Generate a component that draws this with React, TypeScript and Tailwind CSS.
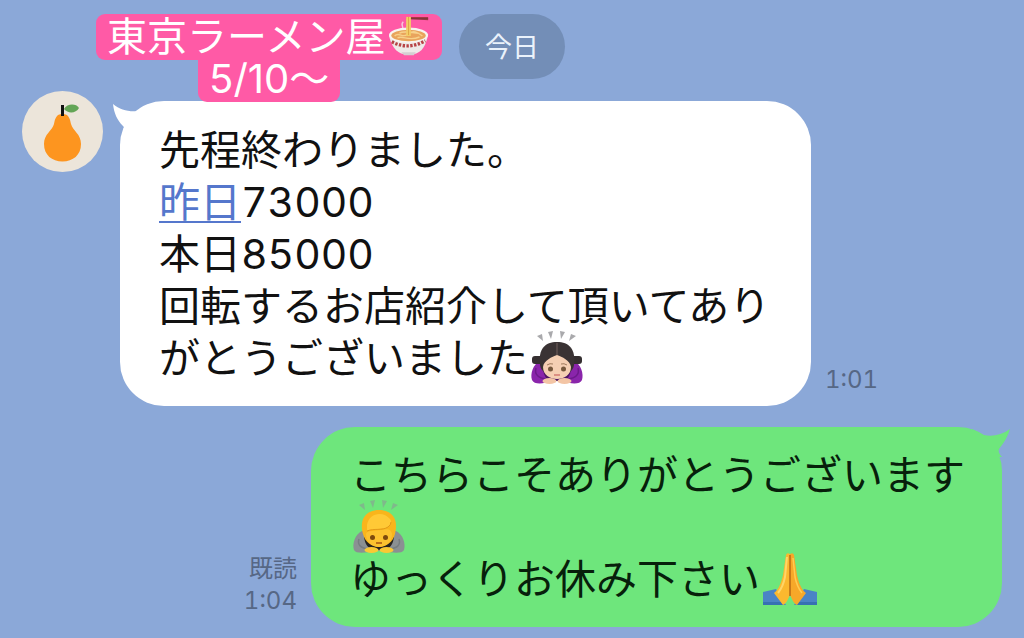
import type { ReactNode } from 'react';

function PearAvatar() {
  return (
    <svg viewBox="0 0 81 81" className="h-[81px] w-[81px] shrink-0" role="img" aria-label="avatar">
      <circle cx="40.5" cy="40.5" r="40.5" fill="#ece5da" />
      <path d="M40.5 23C34 23 33 28 32 33C30 40 22 43 22 53C22 64 30 70.500 40.500 70.500S59 64 59 53C59 43 51 40 49 33C48 28 47 23 40.500 23Z" fill="#fd951f" />
      <rect x="39" y="14" width="3" height="11" fill="#111" />
      <path d="M42 18C45 12.500 54 12 57 17C54 22.500 46 23 42 18Z" fill="#63a556" />
    </svg>
  );
}

function RamenIcon() {
  return (
    <svg viewBox="0 0 46 44" className="ml-[2px] h-[44px] w-[44px] shrink-0" aria-hidden="true">
      <path d="M20 1H43V4.500L20 3Z" fill="#a83a43" />
      <path d="M22 3H43" stroke="#6b3034" strokeWidth="0.800" />
      <path d="M17 6C13 10 19 11 16 16" stroke="#f6c8dc" strokeWidth="1.500" fill="none" />
      <path d="M2 20C4 30 9 39 18 40H28C37 38 41 30 43 19Z" fill="#eeeae8" />
      <ellipse cx="22.500" cy="20" rx="20.500" ry="8" fill="#f8f4f0" />
      <ellipse cx="22.500" cy="20.500" rx="18" ry="6" fill="#e9a45c" />
      <path d="M8 21C12 16 17 24 22 19S32 17 37 21M11 23C17 20 22 27 34 22M13 18C18 15 27 18 33 18" stroke="#f7d18b" strokeWidth="1.500" fill="none" />
      <path d="M20 1H25V21H20Z" fill="#f3cd68" />
      <path d="M22.500 1V20" stroke="#d99b3d" strokeWidth="0.800" />
      <path d="M5 27Q22 36 40 26" stroke="#b74346" strokeWidth="3.500" strokeDasharray="2.500 1.500" fill="none" />
      <path d="M15 38H30L28 41H18Z" fill="#d5cfd2" />
    </svg>
  );
}

function BowMarks({ color }: { color: string }) {
  return (
    <g fill={color}>
      <path d="M7 5L12 3L13 10Z" />
      <path d="M18 1L23 0L21 8Z" />
      <path d="M30 0L35 1L31 8Z" />
      <path d="M41 3L46 5L39 10Z" />
    </g>
  );
}

function BowingWoman() {
  return (
    <svg viewBox="0 0 54 54" className="ml-[2px] inline-block h-[54px] w-[54px]" role="img" aria-label="bowing woman">
      <BowMarks color="#a9a9ac" />
      <path d="M10 30C3 33 0 43 2 49C4 54 14 53 21 50H33C40 53 50 54 52 49C54 43 51 33 44 30Z" fill="#8a25ab" />
      <path d="M6 37C4 44 9 47 16 48M48 37C50 44 45 47 38 48" stroke="#6d1a8b" strokeWidth="1.500" fill="none" />
      <path d="M13 38Q14 49 22 50H32Q40 49 41 38Z" fill="#4d1562" />
      <rect x="2" y="25" width="11" height="8" rx="3" fill="#352f30" />
      <rect x="41" y="25" width="11" height="8" rx="3" fill="#352f30" />
      <path d="M10 34C8 18 15 11 27 11S46 18 44 34C43 41 37 44 27 44S11 41 10 34Z" fill="#3a3334" />
      <path d="M27 24C22 26 14 29 13 36C13 44 20 48 27 48S41 44 41 36C40 29 32 26 27 24Z" fill="#f5cfb3" />
      <path d="M27 12V24" stroke="#71605c" />
      <path d="M17 34Q20 32 23 33M31 33Q34 32 37 34" stroke="#a07a5d" strokeWidth="1" fill="none" />
      <ellipse cx="20.500" cy="38" rx="2.500" ry="2.500" fill="#76583d" />
      <ellipse cx="33.500" cy="38" rx="2.500" ry="2.500" fill="#76583d" />
      <path d="M24 44H30" stroke="#d27a72" strokeWidth="1.500" fill="none" />
      <ellipse cx="19.500" cy="50" rx="7" ry="3" fill="#f3c5a5" />
      <ellipse cx="34.500" cy="50" rx="7" ry="3" fill="#f3c5a5" />
    </svg>
  );
}

function BowingPerson() {
  return (
    <svg viewBox="0 0 54 54" className="ml-[2px] inline-block h-[54px] w-[54px]" role="img" aria-label="bowing person">
      <BowMarks color="#7fb98b" />
      <path d="M10 31C3 34 0 44 2 50C4 54 14 53 21 51H33C40 53 50 54 52 50C54 44 51 34 44 31Z" fill="#8b9093" />
      <path d="M7 39C5 45 9 48 16 49M47 39C49 45 45 48 38 49" stroke="#777d80" strokeWidth="1.500" fill="none" />
      <path d="M12 36Q13 49 23 50H31Q41 49 42 36Z" fill="#29251f" />
      <path d="M11 34C7 19 14 10 27 10S47 19 43 34C41 42 34 47 27 47S13 42 11 34Z" fill="#f9b51b" />
      <path d="M14 34C15 30 23 31 29 30C34 29 39 28 40 34C40 42 34 47 27 47S14 42 14 34Z" fill="#fcc22f" />
      <path d="M15 25C17 12 32 11 38 19C40 22 39 25 36 27C30 30 22 28 15 31Z" fill="#ffc936" />
      <path d="M15 31C22 28 30 31 36 27Q39 25 39 22" stroke="#e39a19" strokeWidth="1" fill="none" />
      <circle cx="20.500" cy="37.500" r="2.500" fill="#7d490d" />
      <circle cx="33.500" cy="37.500" r="2.500" fill="#7d490d" />
      <path d="M24 43H30" stroke="#a75512" strokeWidth="1.500" fill="none" />
      <ellipse cx="19.500" cy="50" rx="7" ry="3" fill="#fac934" />
      <ellipse cx="34.500" cy="50" rx="7" ry="3" fill="#fac934" />
    </svg>
  );
}

function FoldedHands() {
  return (
    <svg viewBox="0 0 56 54" className="ml-[2px] inline-block h-[54px] w-[56px]" role="img" aria-label="folded hands">
      <path d="M1 40L14 37L24 53H1Z" fill="#4a84c6" />
      <path d="M55 40L42 37L32 53H55Z" fill="#4a84c6" />
      <path d="M1 50H22V53H1ZM34 50H55V53H34Z" fill="#3771b2" />
      <path d="M24 3Q25 0 28 2V43C26 47 24 52 21 53L12 41C17 37 19 31 21 23Z" fill="#fbb82f" />
      <path d="M32 3Q31 0 28 2V43C30 47 32 52 35 53L44 41C39 37 37 31 35 23Z" fill="#f7a829" />
      <path d="M28 3V44" stroke="#b86814" strokeWidth="1.500" />
      <path d="M25 5L23 25Q21 35 16 41" stroke="#ffd568" strokeWidth="2" fill="none" />
      <path d="M31 6L33 25Q35 35 40 41" stroke="#ffcb50" strokeWidth="1.500" fill="none" />
    </svg>
  );
}

function Bubble({ mine, children }: { mine?: boolean; children: ReactNode }) {
  return (
    <div
      className={`relative w-[691px] whitespace-nowrap rounded-[44px] px-[39px] text-[41px] leading-[52px] tabular-nums ${
        mine ? 'bg-[#6ee67c] py-[22px] text-[#07200b]' : 'bg-white pt-[23px] pb-[22px] text-[#111]'
      }`}
    >
      {mine ? (
        <svg viewBox="0 0 38 28" className="absolute top-[2px] -right-[8px] h-[28px] w-[38px]" aria-hidden="true">
          <path d="M38 0C30 6 20 8 12 6L0 0V28H30C27 25 26 22 27 20C32 14 36 7 38 0Z" fill="#6ee67c" />
        </svg>
      ) : (
        <svg viewBox="0 0 38 30" className="absolute top-[3px] -left-[7px] h-[30px] w-[38px]" aria-hidden="true">
          <path d="M0 0C7 6 16 8 25 7L38 0V30H9C12 26 12 24 10 22C4 16 1 9 0 0Z" fill="#fff" />
        </svg>
      )}
      {children}
    </div>
  );
}

export default function App() {
  return (
    <main className="relative min-h-screen overflow-hidden bg-[#8ba8d8] pt-[14px] font-['Inter','Noto_Sans_CJK_JP',sans-serif]">
      <div className="mx-auto flex h-[65px] w-[106px] items-center justify-center rounded-full bg-[#738eb7] pt-[4px] text-[27px] text-[#eaf2fb]">
        今日
      </div>

      {/* caption sticker */}
      <div className="absolute top-[14px] left-[96px] z-10 flex flex-col items-center text-[40px] text-white">
        <div className="flex h-[46px] items-center rounded-[9px] bg-[#ff5aa6] px-[11px] leading-[42px]">
          東京ラーメン屋
          <RamenIcon />
        </div>
        <div className="h-[42px] rounded-b-[9px] bg-[#ff5aa6] px-[11px] leading-[38px]">5/10〜</div>
      </div>

      <div className="mt-[12px] flex items-start gap-[17px] pl-[22px]">
        <PearAvatar />
        <div className="mt-[10px] flex items-end gap-[14px]">
          <Bubble>
            <p>先程終わりました。</p>
            <p>
              <a href="#" className="text-[#5577cc] underline decoration-2 underline-offset-4">昨日</a>73000
            </p>
            <p>本日85000</p>
            <p>回転するお店紹介して頂いてあり</p>
            <p className="flex h-[52px] items-center">がとうございました<BowingWoman /></p>
          </Bubble>
          <time className="mb-[10px] text-[24px] leading-[32px] text-[#566785] tabular-nums">1:01</time>
        </div>
      </div>

      <div className="mt-[21px] mb-[11px] flex items-end justify-end gap-[14px] pr-[22px]">
        <div className="mb-[10px] text-right text-[24px] leading-[32px] text-[#566785] tabular-nums">
          <p>既読</p>
          <time>1:04</time>
        </div>
        <Bubble mine>
          <p>こちらこそありがとうございます</p>
          <p className="flex h-[52px] items-center"><BowingPerson /></p>
          <p className="flex h-[52px] items-center">ゆっくりお休み下さい<FoldedHands /></p>
        </Bubble>
      </div>
    </main>
  );
}
